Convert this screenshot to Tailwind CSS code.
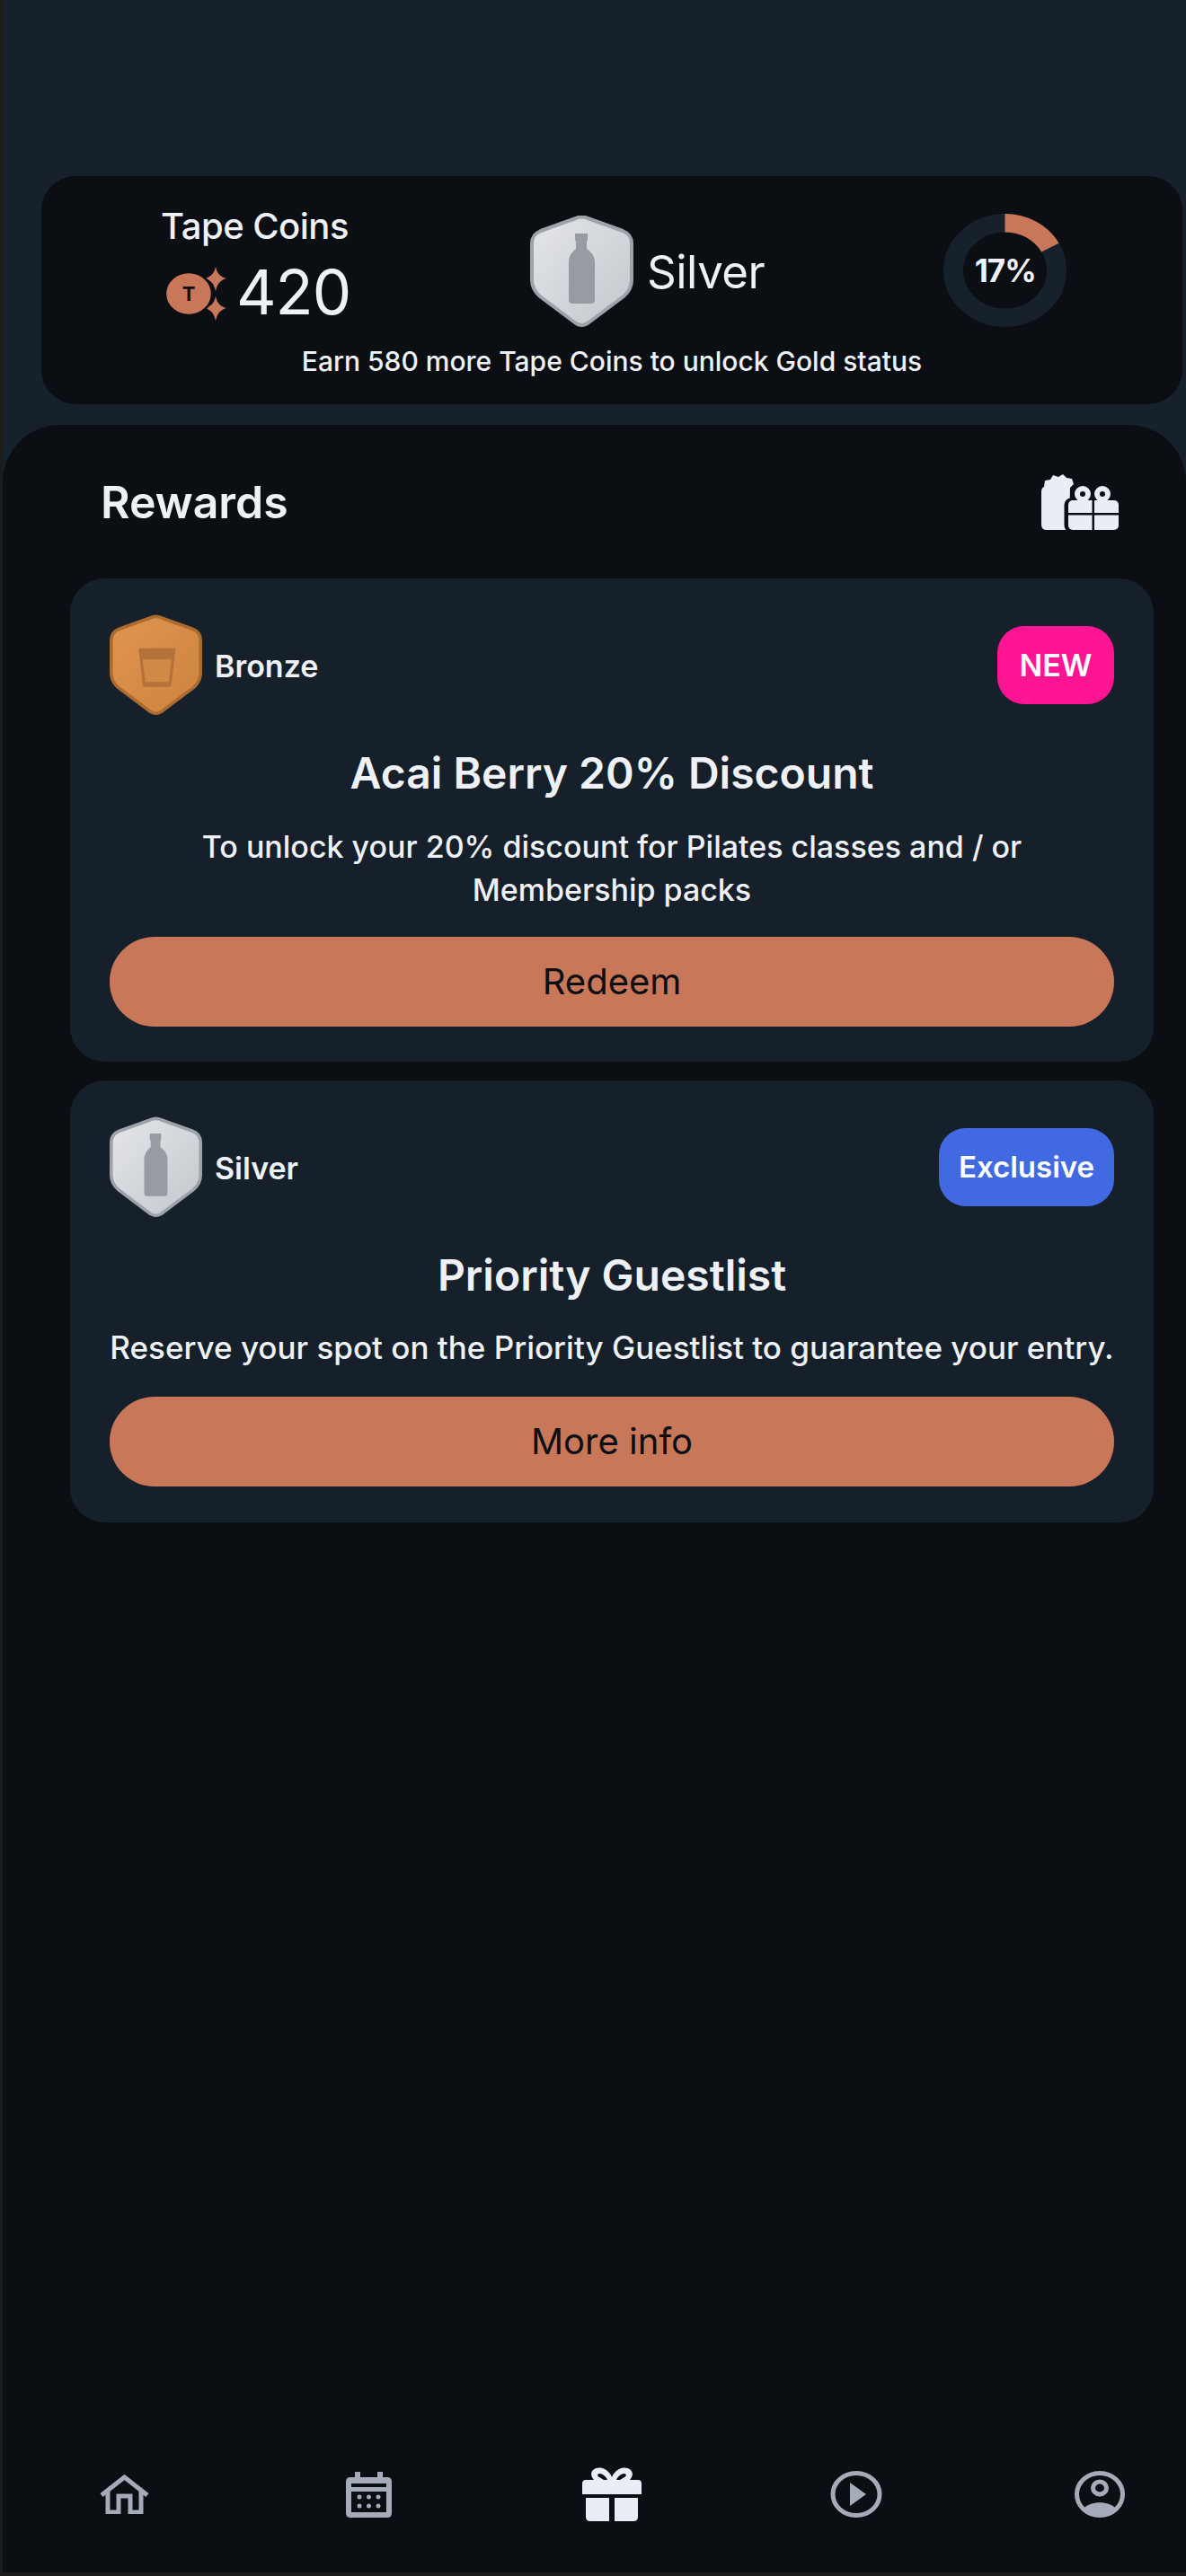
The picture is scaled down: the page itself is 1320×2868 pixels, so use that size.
<!DOCTYPE html>
<html lang="en">
<head>
    <meta charset="UTF-8">
    <meta name="viewport" content="width=device-width, initial-scale=1.0">
    <title>Rewards</title>
    <script src="https://cdn.jsdelivr.net/npm/@tailwindcss/browser@4"></script>
</head>
<body class="bg-[#1c1c1c] font-['Inter',sans-serif]">
<svg width="0" height="0" class="absolute">
    <defs>
        <linearGradient id="silverFill" x1="0" y1="0" x2="1" y2="1"><stop offset="0" stop-color="#e4e6e9"/><stop offset="1" stop-color="#c3c7cc"/></linearGradient>
        <linearGradient id="bronzeFill" x1="0" y1="0" x2="1" y2="1"><stop offset="0" stop-color="#e0954e"/><stop offset="1" stop-color="#cc8440"/></linearGradient>
    </defs>
</svg>

<div class="ml-[3px] w-[1317px] h-[2864px] bg-[#17212c] flex flex-col pt-[196px] overflow-hidden">

    <!-- Status card -->
    <section class="ml-[43px] w-[1270px] h-[254px] shrink-0 rounded-[38px] bg-[#0b0e13] pt-[37px] text-[#eef1f6]">
        <div class="flex items-center h-[136px] pl-[133px]">
            <div class="w-[212px] self-start -mt-[3px]">
                <p class="text-[40px] leading-[44px] font-medium tracking-[-0.5px]">Tape Coins</p>
                <div class="flex items-center gap-[11px] mt-[23px] ml-[6px]">
                    <svg class="w-[67px] h-[60px]" viewBox="0 0 67 60">
                        <path d="M55 0C57 8 60 11 67 13 60 15 57 19 55 27 53 19 50 15 43 13 50 11 53 8 55 0Z" fill="#c97759"/>
                        <path d="M55 33C57 41 60 44 67 46 60 48 57 52 55 60 53 52 50 48 43 46 50 44 53 41 55 33Z" fill="#c97759"/>
                        <ellipse cx="25" cy="30" rx="26" ry="24" fill="#c97759" stroke="#0b0e13" stroke-width="2.500"/>
                        <text x="25" y="38" text-anchor="middle" font-size="22" font-weight="700" fill="#0b0e13">T</text>
                    </svg>
                    <span class="text-[69px] leading-[60px] tracking-[-1px] -mt-[5px]">420</span>
                </div>
            </div>
            <div class="ml-[199px] flex items-center gap-[15px] mt-[3px]">
                <svg class="w-[115px] h-[125px]" viewBox="0 0 115 125">
                    <path d="M51 3Q57.500 0 64 3L103 17Q113 21 113 31L113 72Q113 82 104 90L64 120Q57.500 124 51 120L11 90Q2 82 2 72L2 31Q2 21 12 17Z" fill="url(#silverFill)" stroke="#9ea3a9" stroke-width="4" stroke-linejoin="round"/>
                    <path d="M50 20H64V27L63 29V37Q72 43 72 52V94Q72 98 68 98H47Q43 98 43 94V52Q43 43 51 37V29L50 27Z" fill="#979ca2"/>
                </svg>
                <span class="text-[51px] leading-[60px] tracking-[-0.5px]">Silver</span>
            </div>
            <div class="ml-[199px] relative w-[137px] h-[126px] flex items-center justify-center">
                <svg class="absolute inset-0 w-[137px] h-[126px]" viewBox="0 0 136 136" preserveAspectRatio="none">
                    <circle cx="68" cy="68" r="57" fill="none" stroke="#17212c" stroke-width="22"/>
                    <circle cx="68" cy="68" r="57" fill="none" stroke="#c97759" stroke-width="22" pathLength="100" stroke-dasharray="17 83" transform="rotate(-90 68 68)"/>
                </svg>
                <span class="relative text-[35px] font-bold tracking-[-1px]">17%</span>
            </div>
        </div>
        <p class="text-center text-[30px] leading-[40px] font-medium mt-[13px]">Earn 580 more Tape Coins to unlock Gold status</p>
    </section>

    <!-- Rewards panel -->
    <main class="mt-[23px] flex-1 rounded-t-[64px] bg-[#0b0e13] flex flex-col text-[#eef1f6]">
        <header class="flex items-center justify-between pl-[109px] pr-[75px] pt-[55px] h-[117px]">
            <h1 class="text-[50px] leading-[60px] font-semibold">Rewards</h1>
            <svg class="w-[86px] h-[62px]" viewBox="0 0 86 62" fill="#e9edf5">
                <path d="M3 14L4 7 10 6 13 1 19 3 24 0 28 4 34 5 36 11 32 15 31 62H6Q0 62 0 56V20Q0 15 3 14Z"/>
                <circle cx="46" cy="22" r="8" fill="none" stroke="#0b0e13" stroke-width="8"/>
                <circle cx="68" cy="22" r="8" fill="none" stroke="#0b0e13" stroke-width="8"/>
                <rect x="28" y="29" width="58" height="33" rx="5" stroke="#0b0e13" stroke-width="5"/>
                <rect x="30" y="29" width="56" height="33" rx="5"/>
                <circle cx="46" cy="22" r="6" fill="none" stroke="#e9edf5" stroke-width="6"/>
                <circle cx="68" cy="22" r="6" fill="none" stroke="#e9edf5" stroke-width="6"/>
                <path d="M28 43H86V45.500H28ZM56.500 24H59V62H56.500Z" fill="#0b0e13"/>
            </svg>
        </header>

        <div class="flex flex-col gap-[21px] ml-[75px] w-[1206px] mt-[54px]">
            <!-- Bronze reward -->
            <article class="h-[538px] rounded-[38px] bg-[#16202b] px-[44px] pt-[40px]">
                <div class="flex items-start justify-between">
                    <div class="flex items-center gap-[14px] h-[114px]">
                        <svg class="w-[103px] h-[114px]" viewBox="0 0 115 125">
                            <path d="M51 3Q57.500 0 64 3L103 17Q113 21 113 31L113 72Q113 82 104 90L64 120Q57.500 124 51 120L11 90Q2 82 2 72L2 31Q2 21 12 17Z" fill="url(#bronzeFill)" stroke="#ad6b30" stroke-width="4" stroke-linejoin="round"/>
                            <path d="M36 41H82L77 85Q77 89 73 89H45Q41 89 41 85Z" fill="#b5713a"/>
                            <path d="M41 55H77L73.500 83H44.500Z" fill="#d08a46"/>
                        </svg>
                        <span class="text-[34px] font-semibold">Bronze</span>
                    </div>
                    <span class="mt-[13px] h-[87px] w-[130px] rounded-[30px] bg-[#ff1493] flex items-center justify-center text-[34px] font-semibold text-white">NEW</span>
                </div>
                <h2 class="mt-[33px] text-center text-[48px] leading-[60px] font-semibold">Acai Berry 20% Discount</h2>
                <p class="mt-[28px] text-center text-[34px] leading-[48px] font-medium">To unlock your 20% discount for Pilates classes and / or<br>Membership packs</p>
                <button class="mt-[28px] w-full h-[100px] rounded-full bg-[#c97759] text-[40px] text-[#0b0e13]">Redeem</button>
            </article>

            <!-- Silver reward -->
            <article class="h-[492px] rounded-[38px] bg-[#16202b] px-[44px] pt-[40px]">
                <div class="flex items-start justify-between">
                    <div class="flex items-center gap-[14px] h-[114px]">
                        <svg class="w-[103px] h-[114px]" viewBox="0 0 115 125">
                            <path d="M51 3Q57.500 0 64 3L103 17Q113 21 113 31L113 72Q113 82 104 90L64 120Q57.500 124 51 120L11 90Q2 82 2 72L2 31Q2 21 12 17Z" fill="url(#silverFill)" stroke="#9ea3a9" stroke-width="4" stroke-linejoin="round"/>
                            <path d="M50 20H64V27L63 29V37Q72 43 72 52V94Q72 98 68 98H47Q43 98 43 94V52Q43 43 51 37V29L50 27Z" fill="#979ca2"/>
                        </svg>
                        <span class="text-[34px] font-semibold">Silver</span>
                    </div>
                    <span class="mt-[13px] h-[87px] w-[195px] rounded-[30px] bg-[#4169e1] flex items-center justify-center text-[33px] font-semibold text-white">Exclusive</span>
                </div>
                <h2 class="mt-[33px] text-center text-[48px] leading-[60px] font-semibold">Priority Guestlist</h2>
                <p class="mt-[26px] text-center text-[35px] leading-[48px] font-medium">Reserve your spot on the Priority Guestlist to guarantee your entry.</p>
                <button class="mt-[31px] w-full h-[100px] rounded-full bg-[#c97759] text-[40px] text-[#0b0e13]">More info</button>
            </article>
        </div>

        <!-- Bottom nav -->
        <nav class="mt-auto h-[174px] flex items-center pl-[108px] text-[#a5abb8]">
            <svg class="w-[55px] h-[44px]" viewBox="0 0 55 44" fill="none" stroke="currentColor" stroke-width="5">
                <path d="M2 23L27.500 3 53 23M9 18V42H21V24H34V42H46V18"/>
            </svg>
            <svg class="ml-[219px] w-[51px] h-[51px]" viewBox="0 0 51 51" fill="currentColor">
                <path fill-rule="evenodd" d="M10 0H16V6H35V0H41V6H46Q51 6 51 11V46Q51 51 46 51H5Q0 51 0 46V11Q0 6 5 6H10ZM6 13V17H45V13ZM6 22V45H45V22Z"/>
                <circle cx="15" cy="28" r="2.500"/><circle cx="25.500" cy="28" r="2.500"/><circle cx="36" cy="28" r="2.500"/>
                <circle cx="15" cy="38" r="2.500"/><circle cx="25.500" cy="38" r="2.500"/><circle cx="36" cy="38" r="2.500"/>
            </svg>
            <svg class="ml-[212px] w-[66px] h-[60px]" viewBox="0 0 66 60" fill="#e9edf5">
                <path fill-rule="evenodd" d="M13 14C5 5 15 -3 25 2 29 4 32 8 33 11 34 8 37 4 41 2 51 -3 61 5 53 14H62Q66 14 66 18V30H0V18Q0 14 4 14ZM20 7C17 7 16 9 19 11L24 14H28C27 11 24 8 20 7ZM46 7C42 8 39 11 38 14H42L47 11C50 9 49 7 46 7Z"/>
                <path d="M4 34H30V60H9Q4 60 4 55ZM36 34H62V55Q62 60 57 60H36Z"/>
            </svg>
            <svg class="ml-[210px] w-[58px] h-[52px]" viewBox="0 0 58 52" fill="none" stroke="currentColor" stroke-width="5">
                <ellipse cx="29" cy="26" rx="26" ry="23.500"/>
                <path d="M22 13L40 26 22 39Z" fill="currentColor" stroke="none"/>
            </svg>
            <svg class="ml-[214px] w-[56px] h-[52px]" viewBox="0 0 56 52" fill="none" stroke="currentColor" stroke-width="5">
                <ellipse cx="28" cy="26" rx="25.500" ry="23.500"/>
                <ellipse cx="28" cy="19" rx="7.500" ry="7"/>
                <path d="M10 42C17 33 39 33 46 42C39 51 17 51 10 42Z" fill="currentColor" stroke="none"/>
            </svg>
        </nav>
    </main>
</div>
</body>
</html>
